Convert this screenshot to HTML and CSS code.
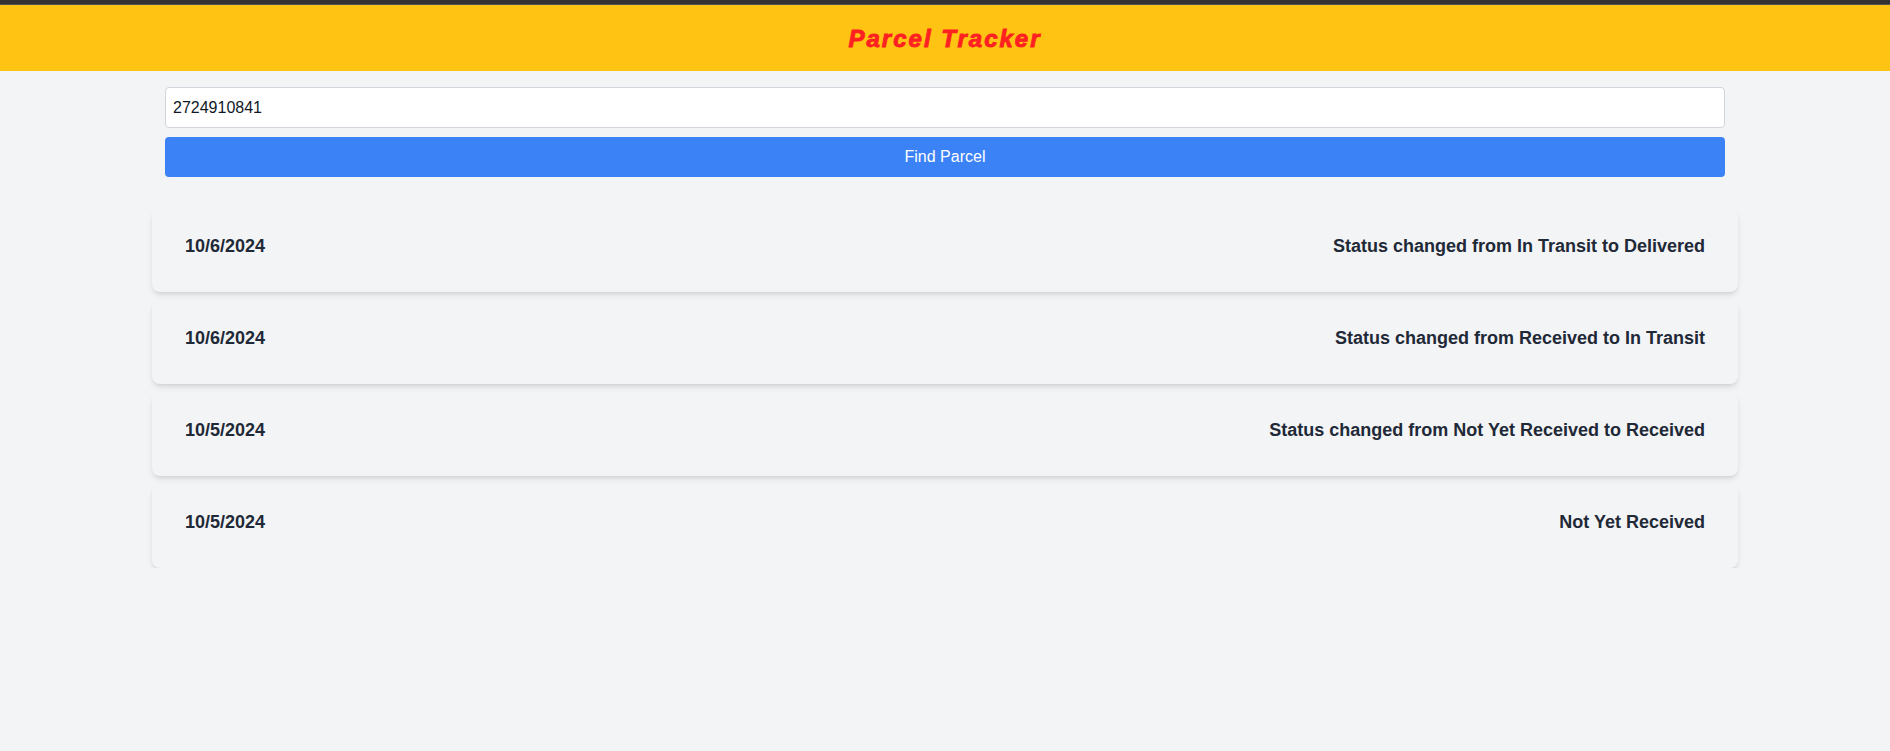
FILE: index.html
```html
<!DOCTYPE html>
<html lang="en">
<head>
<meta charset="utf-8">
<title>Parcel Tracker</title>
<link rel="stylesheet" href="styles.css">
</head>
<body>
<div class="topbar"></div>
<header class="header">
  <h1 class="title">Parcel Tracker</h1>
</header>
<main class="main">
  <form class="search">
    <input class="search-input" type="text" value="2724910841">
    <button class="search-btn" type="button">Find Parcel</button>
  </form>
  <section class="history">
    <div class="event">
      <span class="event-date">10/6/2024</span>
      <span class="event-text">Status changed from In Transit to Delivered</span>
    </div>
    <div class="event">
      <span class="event-date">10/6/2024</span>
      <span class="event-text">Status changed from Received to In Transit</span>
    </div>
    <div class="event">
      <span class="event-date">10/5/2024</span>
      <span class="event-text">Status changed from Not Yet Received to Received</span>
    </div>
    <div class="event">
      <span class="event-date">10/5/2024</span>
      <span class="event-text">Not Yet Received</span>
    </div>
  </section>
</main>
</body>
</html>
```

FILE: styles.css
```css
* { box-sizing: border-box; }

body {
  margin: 0;
  background: #f3f4f6;
  font-family: "Liberation Sans", Arial, sans-serif;
  color: #1f2937;
}

.topbar {
  height: 5px;
  background: #333333;
  border-bottom: 1px solid #555555;
}

.header {
  height: 66px;
  padding-top: 2px;
  background: #ffc314;
  display: flex;
  align-items: center;
  justify-content: center;
}

.title {
  margin: 0;
  font-size: 24px;
  font-weight: 700;
  font-style: italic;
  letter-spacing: 2px;
  color: #ff2121;
  -webkit-text-stroke: 0.9px #ff2121;
  line-height: 1;
}

.main {
  width: 1586px;
  margin: 0 auto;
  padding-top: 16px;
}

.search {
  margin: 0 13px;
  display: flex;
  flex-direction: column;
  gap: 9px;
}

.search-input {
  height: 41px;
  border: 1px solid #d1d5db;
  border-radius: 4px;
  background: #ffffff;
  padding: 0 7px;
  font-family: "Liberation Sans", Arial, sans-serif;
  font-size: 16px;
  color: #111827;
  outline: none;
}

.search-btn {
  height: 40px;
  border: none;
  border-radius: 4px;
  background: #3b82f6;
  color: #ffffff;
  font-family: "Liberation Sans", Arial, sans-serif;
  font-size: 16px;
}

.history {
  margin-top: 31px;
  display: flex;
  flex-direction: column;
  gap: 8px;
}

.event {
  display: flex;
  justify-content: space-between;
  align-items: center;
  height: 84px;
  padding: 0 33px 8px 33px;
  background: #f3f4f6;
  border-radius: 8px;
  box-shadow: 0 4px 6px -1px rgba(0, 0, 0, 0.1), 0 2px 4px -2px rgba(0, 0, 0, 0.1);
  font-size: 18px;
  font-weight: 700;
  line-height: 28px;
}

.event-text {
  text-align: right;
}
```
